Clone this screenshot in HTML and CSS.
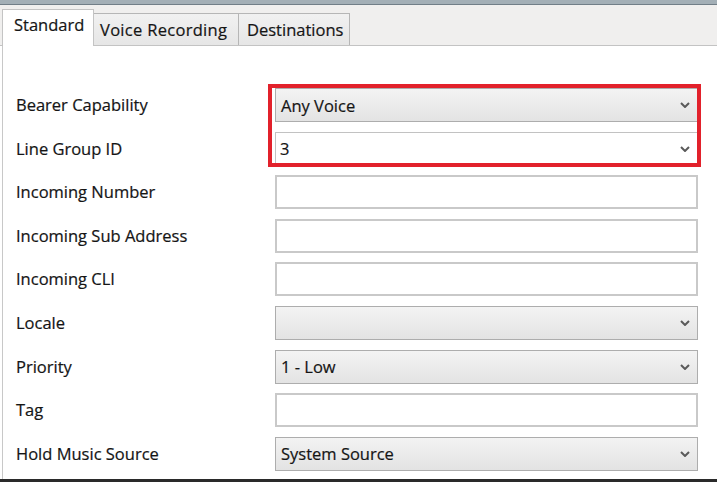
FILE: index.html
```html
<!DOCTYPE html>
<html>
<head>
<meta charset="utf-8">
<link rel="stylesheet" href="styles.css">
</head>
<body>
<div class="window">
  <div class="topband"></div>
  <div class="tabstrip">
    <div class="tab active">Standard</div>
    <div class="tab">Voice Recording</div>
    <div class="tab">Destinations</div>
  </div>
  <div class="content">
    <div class="form">
      <div class="label">Bearer Capability</div>
      <div class="field select"><span>Any Voice</span><svg class="chev" viewBox="0 0 10 6"><path d="M1 1 L5 5 L9 1" /></svg></div>
      <div class="label">Line Group ID</div>
      <div class="field select white"><span>3</span><svg class="chev" viewBox="0 0 10 6"><path d="M1 1 L5 5 L9 1" /></svg></div>
      <div class="label">Incoming Number</div>
      <div class="field input"></div>
      <div class="label">Incoming Sub Address</div>
      <div class="field input"></div>
      <div class="label">Incoming CLI</div>
      <div class="field input"></div>
      <div class="label">Locale</div>
      <div class="field select"><span></span><svg class="chev" viewBox="0 0 10 6"><path d="M1 1 L5 5 L9 1" /></svg></div>
      <div class="label">Priority</div>
      <div class="field select"><span>1 - Low</span><svg class="chev" viewBox="0 0 10 6"><path d="M1 1 L5 5 L9 1" /></svg></div>
      <div class="label">Tag</div>
      <div class="field input"></div>
      <div class="label">Hold Music Source</div>
      <div class="field select"><span>System Source</span><svg class="chev" viewBox="0 0 10 6"><path d="M1 1 L5 5 L9 1" /></svg></div>
    </div>
    <div class="highlight"></div>
  </div>
  <div class="bottomline"></div>
</div>
</body>
</html>
```
FILE: styles.css
```css
html, body {
  margin: 0;
  padding: 0;
  background: #ffffff;
}
body {
  width: 717px;
  height: 482px;
  overflow: hidden;
  font-family: "Open Sans", "Noto Sans", "Liberation Sans", sans-serif;
  font-size: 16.5px;
  color: #151515;
  -webkit-text-stroke: 0.2px #151515;
}
.window {
  position: relative;
  width: 717px;
  height: 482px;
  display: flex;
  flex-direction: column;
}
.topband {
  height: 4px;
  background: #a3afb6;
  border-bottom: 1px solid #717e87;
}
.tabstrip {
  height: 40px;
  background: #f0efee;
  border-bottom: 1px solid #c3c3c3;
  display: flex;
  align-items: flex-end;
  padding-left: 2px;
}
.tab {
  height: 32px;
  box-sizing: border-box;
  padding: 0 6px;
  display: flex;
  align-items: center;
  border: 1px solid #b6b6b6;
  border-bottom: none;
  background: linear-gradient(#f1f1f1, #e6e6e6);
  margin-left: -1px;
  white-space: nowrap;
}
.tab:nth-child(2) { width: 146px; letter-spacing: 0.3px; }
.tab:nth-child(3) { width: 112px; padding-left: 8px; }
.tab.active {
  height: 37px;
  width: 92px;
  margin-left: 0;
  margin-bottom: -1px;
  background: #ffffff;
  border-color: #c4c4c4;
  padding: 0 0 7px 11px;
  position: relative;
  z-index: 1;
}
.content {
  position: relative;
  flex: 1;
  border-left: 1px solid #c8c8c8;
  margin-left: 2px;
  background: #ffffff;
}
.form {
  display: grid;
  grid-template-columns: 259px 423px;
  grid-auto-rows: 34px;
  row-gap: 9.6px;
  padding: 42px 0 0 13px;
  align-items: center;
}
.label {
  white-space: nowrap;
  line-height: 22px;
}
.field {
  height: 34px;
  box-sizing: border-box;
  display: flex;
  align-items: center;
}
.select {
  border: 1px solid #adadad;
  background: linear-gradient(#f3f3f3, #e3e3e3);
  padding: 0 7px 0 5px;
  justify-content: space-between;
}
.select.white {
  background: #ffffff;
  border-color: #c2c2c2;
  padding-left: 4px;
}
.input {
  border: 2px solid #c9c9c9;
  background: #ffffff;
}
.chev {
  width: 10px;
  height: 6px;
  fill: none;
  stroke: #5a5a5a;
  stroke-width: 2;
}
.highlight {
  position: absolute;
  left: 265px;
  top: 38px;
  width: 425px;
  height: 75px;
  border: 4px solid #e2212b;
}
.bottomline {
  height: 3px;
  background: #2a2a2a;
}
```
